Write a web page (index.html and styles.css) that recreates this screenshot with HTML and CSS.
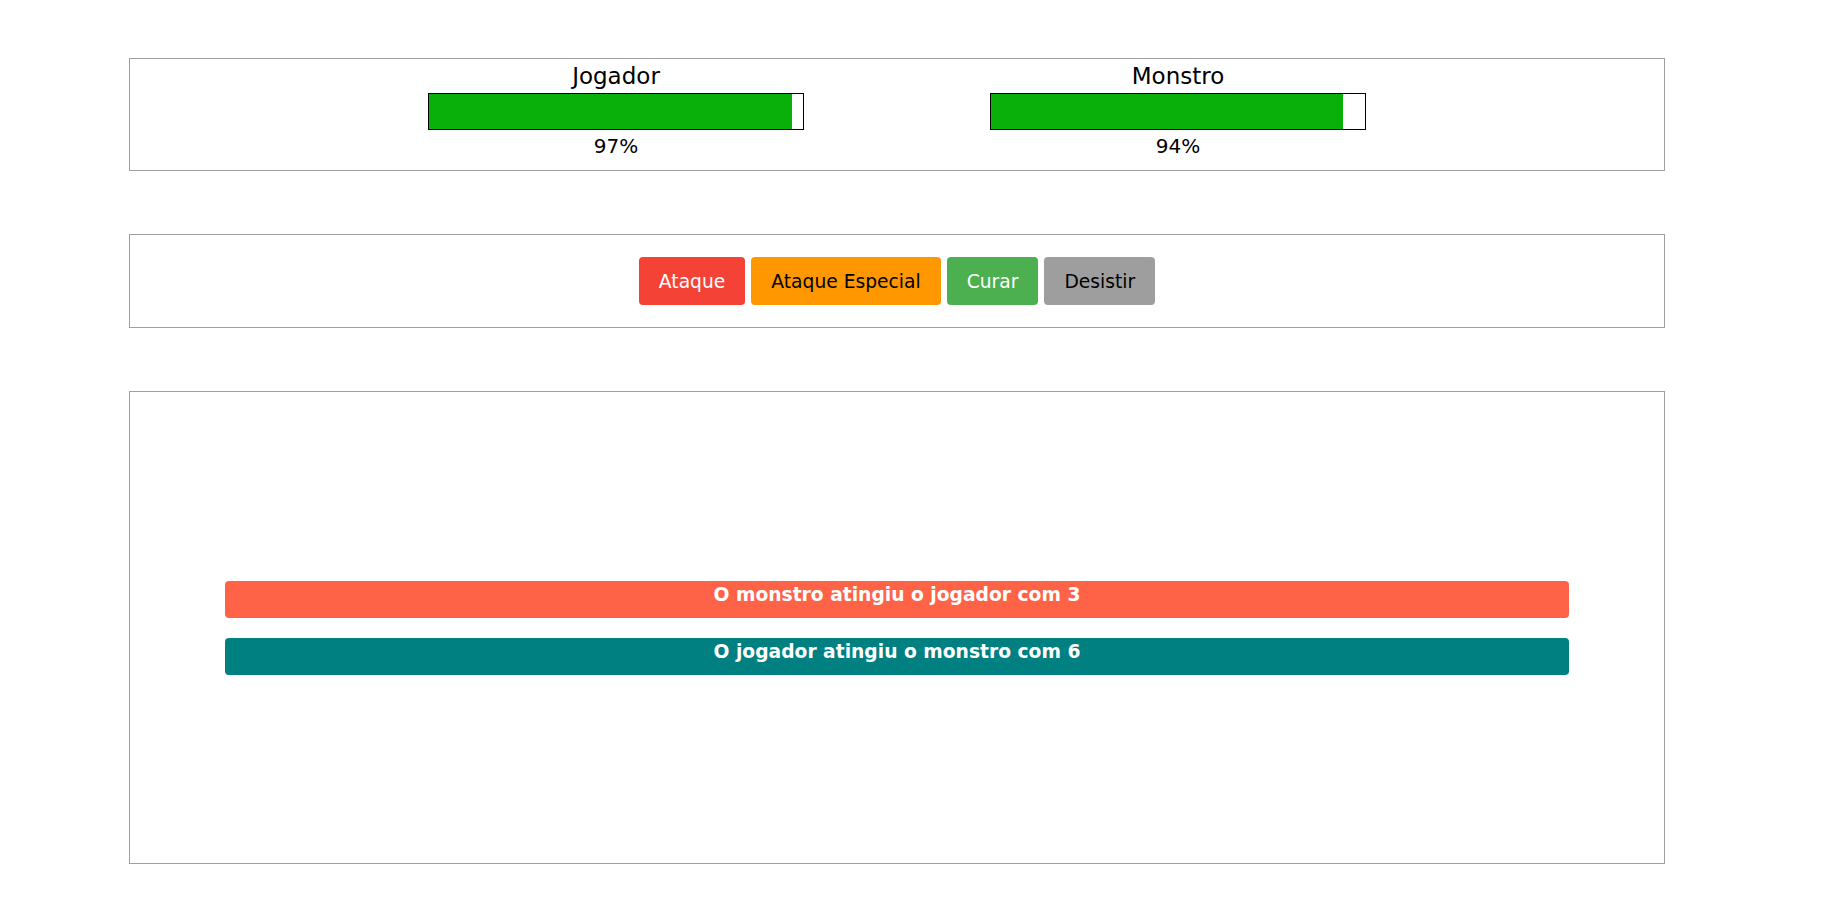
FILE: index.html
```html
<!DOCTYPE html>
<html lang="pt">
<head>
<meta charset="utf-8">
<title>Monstro</title>
<link rel="stylesheet" href="styles.css">
</head>
<body>
<div class="app">
  <section class="panel scores">
    <div class="score">
      <h1 class="score-name">Jogador</h1>
      <div class="life"><div class="life-fill" style="width:97%"></div></div>
      <div class="pct">97%</div>
    </div>
    <div class="score">
      <h1 class="score-name">Monstro</h1>
      <div class="life"><div class="life-fill" style="width:94%"></div></div>
      <div class="pct">94%</div>
    </div>
  </section>
  <section class="panel buttons">
    <button class="btn btn-attack">Ataque</button>
    <button class="btn btn-special">Ataque Especial</button>
    <button class="btn btn-heal">Curar</button>
    <button class="btn btn-quit">Desistir</button>
  </section>
  <section class="panel logs">
    <ul class="log-list">
      <li class="log log-monster">O monstro atingiu o jogador com 3</li>
      <li class="log log-player">O jogador atingiu o monstro com 6</li>
    </ul>
  </section>
</div>
</body>
</html>
```
FILE: styles.css
```css
body {
  margin: 0;
  background: #fff;
  color: #000;
  font-family: "DejaVu Sans", Verdana, sans-serif;
}

.app {
  display: flex;
  flex-direction: column;
  gap: 63px;
  padding: 58px 0 0 129px;
}

.panel {
  width: 1536px;
  box-sizing: border-box;
  border: 1px solid #a0a0a0;
}

.scores {
  display: flex;
  justify-content: center;
  padding: 4px 0 12px;
}

.score {
  width: 562px;
  display: flex;
  flex-direction: column;
  align-items: center;
}

.score-name {
  margin: 0;
  font-size: 23px;
  font-weight: normal;
  line-height: 26px;
}

.life {
  width: 376px;
  height: 37px;
  box-sizing: border-box;
  border: 1px solid #000;
  margin-top: 4px;
  display: flex;
  background: #fff;
}

.life-fill {
  height: 100%;
  background: #0ab00a;
}

.pct {
  margin-top: 5px;
  font-size: 20px;
  line-height: 23px;
}

.buttons {
  display: flex;
  justify-content: center;
  gap: 6px;
  padding: 22px 0;
}

.btn {
  height: 48px;
  padding: 0 20px;
  border: none;
  border-radius: 4px;
  font-family: "DejaVu Sans", Verdana, sans-serif;
  font-size: 18.7px;
  cursor: pointer;
}

.btn-attack { background: #f44336; color: #fff; }
.btn-special { background: #ff9800; color: #000; }
.btn-heal { background: #4caf50; color: #fff; }
.btn-quit { background: #9e9e9e; color: #000; }

.logs {
  height: 473px;
  display: flex;
  flex-direction: column;
  justify-content: center;
  align-items: center;
}

.log-list {
  list-style: none;
  margin: 0;
  padding: 0;
  width: 1344px;
  display: flex;
  flex-direction: column;
  gap: 20px;
}

.log {
  height: 37px;
  box-sizing: border-box;
  padding-top: 3px;
  border-radius: 4px;
  color: #fff;
  font-weight: bold;
  font-size: 18.7px;
  line-height: 21.5px;
  text-align: center;
}

.log-monster { background: #ff6347; }
.log-player { background: #008080; }
```
